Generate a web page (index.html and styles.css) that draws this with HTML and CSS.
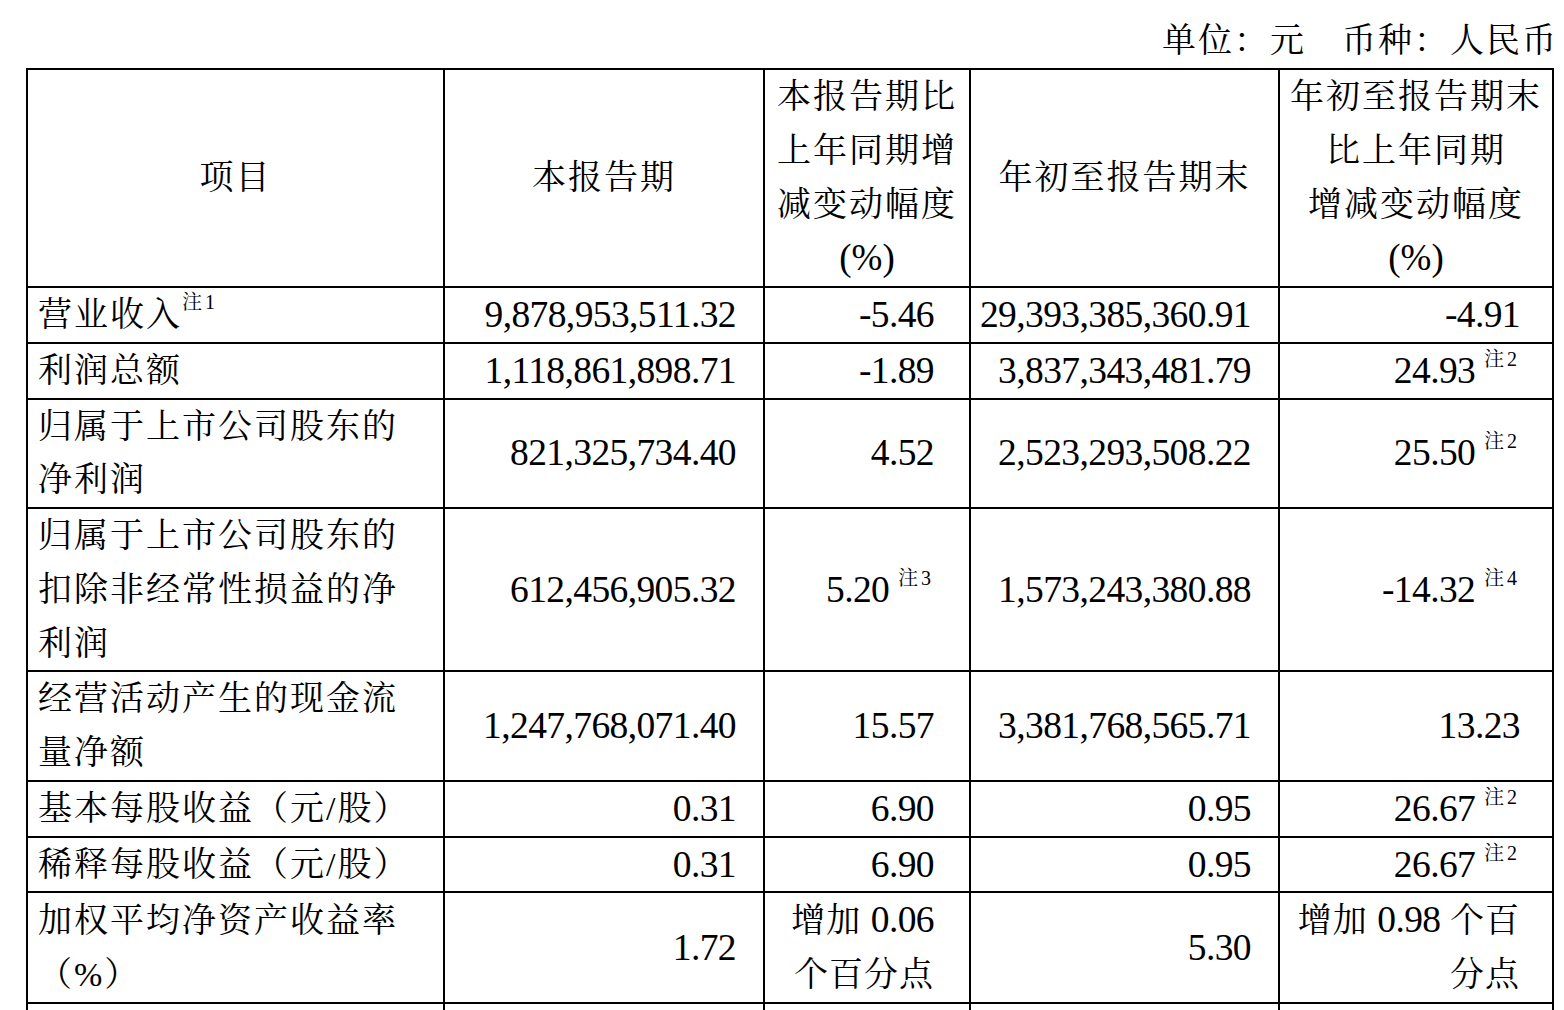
FILE: index.html
```html
<!DOCTYPE html>
<html lang="zh-CN">
<head>
<meta charset="utf-8">
<title>主要会计数据和财务指标</title>
<link rel="stylesheet" href="styles.css">
</head>
<body>
<div class="page">
  <div class="unit">单位：元　币种：人民币</div>
  <table class="report">
    <colgroup>
      <col class="c1"><col class="c2"><col class="c3"><col class="c4"><col class="c5">
    </colgroup>
    <thead>
      <tr>
        <th>项目</th>
        <th>本报告期</th>
        <th>本报告期比<br>上年同期增<br>减变动幅度<br><span class="pct">(%)</span></th>
        <th>年初至报告期末</th>
        <th>年初至报告期末<br>比上年同期<br>增减变动幅度<br><span class="pct">(%)</span></th>
      </tr>
    </thead>
    <tbody>
      <tr>
        <td class="label">营业收入<sup class="note">注1</sup></td>
        <td class="num">9,878,953,511.32</td>
        <td class="num">-5.46</td>
        <td class="num">29,393,385,360.91</td>
        <td class="num">-4.91</td>
      </tr>
      <tr>
        <td class="label">利润总额</td>
        <td class="num">1,118,861,898.71</td>
        <td class="num">-1.89</td>
        <td class="num">3,837,343,481.79</td>
        <td class="num">24.93 <sup class="note">注2</sup></td>
      </tr>
      <tr>
        <td class="label">归属于上市公司股东的净利润</td>
        <td class="num">821,325,734.40</td>
        <td class="num">4.52</td>
        <td class="num">2,523,293,508.22</td>
        <td class="num">25.50 <sup class="note">注2</sup></td>
      </tr>
      <tr>
        <td class="label">归属于上市公司股东的扣除非经常性损益的净利润</td>
        <td class="num">612,456,905.32</td>
        <td class="num">5.20 <sup class="note">注3</sup></td>
        <td class="num">1,573,243,380.88</td>
        <td class="num">-14.32 <sup class="note">注4</sup></td>
      </tr>
      <tr>
        <td class="label">经营活动产生的现金流量净额</td>
        <td class="num">1,247,768,071.40</td>
        <td class="num">15.57</td>
        <td class="num">3,381,768,565.71</td>
        <td class="num">13.23</td>
      </tr>
      <tr>
        <td class="label">基本每股收益（元/股）</td>
        <td class="num">0.31</td>
        <td class="num">6.90</td>
        <td class="num">0.95</td>
        <td class="num">26.67 <sup class="note">注2</sup></td>
      </tr>
      <tr>
        <td class="label">稀释每股收益（元/股）</td>
        <td class="num">0.31</td>
        <td class="num">6.90</td>
        <td class="num">0.95</td>
        <td class="num">26.67 <sup class="note">注2</sup></td>
      </tr>
      <tr>
        <td class="label">加权平均净资产收益率（%）</td>
        <td class="num">1.72</td>
        <td class="num mixed">增加 <span class="fig">0.06</span><br>个百分点</td>
        <td class="num">5.30</td>
        <td class="num mixed">增加 <span class="fig">0.98</span> 个百<br>分点</td>
      </tr>
      <tr class="more">
        <td class="label">&nbsp;</td>
        <td class="num">&nbsp;</td>
        <td class="num">&nbsp;</td>
        <td class="num">&nbsp;</td>
        <td class="num">&nbsp;</td>
      </tr>
    </tbody>
  </table>
</div>
</body>
</html>
```
FILE: styles.css
```css
html, body {
  margin: 0;
  padding: 0;
  background: #ffffff;
}

body {
  color: #000000;
  font-family: "Liberation Serif", "Noto Serif CJK SC", "Noto Sans CJK SC", serif;
  font-size: 34px;
}

.page {
  padding: 13px 0 0 26px;
}

.unit {
  width: 1532px;
  text-align: right;
  line-height: 55px;
  letter-spacing: 2px;
  white-space: nowrap;
}

.report {
  border-collapse: collapse;
  table-layout: fixed;
  width: 1526px;
}

.report .c1 { width: 417px; }
.report .c2 { width: 320px; }
.report .c3 { width: 206px; }
.report .c4 { width: 309px; }
.report .c5 { width: 274px; }

.report th,
.report td {
  border: 2px solid #000000;
  padding: 0;
  line-height: 53.75px;
  font-size: 34px;
  font-weight: normal;
  vertical-align: middle;
}

.report th {
  text-align: center;
  letter-spacing: 2px;
  padding: 0 2px;
}

.report th .pct {
  font-size: 37px;
  letter-spacing: 0;
}

.report td.label {
  text-align: left;
  letter-spacing: 2px;
  padding: 0 20px 0 10px;
}

.report td.num {
  text-align: right;
  font-size: 37.5px;
  letter-spacing: -0.6px;
  white-space: nowrap;
}

.report td.mixed {
  font-size: 34px;
  letter-spacing: 1px;
}

.report td.mixed .fig {
  font-size: 37.5px;
  letter-spacing: -0.6px;
}

.report td:nth-child(2) { padding-right: 27px; }
.report td:nth-child(3) { padding-right: 35px; }
.report td:nth-child(4) { padding-right: 27px; }
.report td:nth-child(5) { padding-right: 32px; }

.note {
  font-size: 20px;
  line-height: 0;
  letter-spacing: 3px;
  vertical-align: 17px;
}
```
